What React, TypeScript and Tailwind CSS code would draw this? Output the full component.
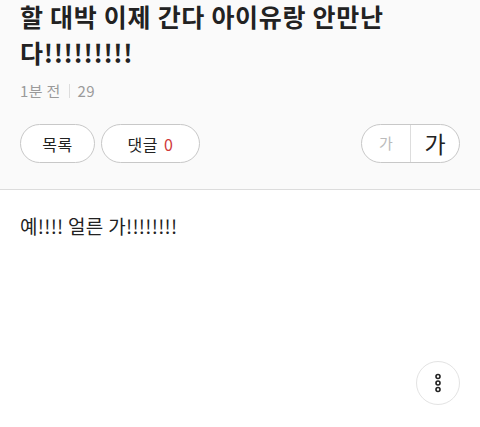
import React from "react";

export default function App() {
  const font = { fontFamily: '"Noto Sans CJK KR", "Noto Sans", sans-serif' };
  return (
    <div className="w-[480px] h-[427px] bg-white overflow-hidden" style={font}>
      <div className="bg-[#fafafa] border-b border-[#dcdcdc] px-5 pb-[26px]">
        <h1 className="text-[25px] leading-[36px] font-bold text-[#222] -mt-[2px] tracking-[0.7px]">
          할 대박 이제 간다 아이유랑 안만난다!!!!!!!!!
        </h1>
        <div className="flex items-center mt-[11px] text-[15px] leading-[20px] text-[#9a9a9a] tracking-[0.3px]">
          <span>1분 전</span>
          <span className="w-px h-[14px] bg-[#dddddd] mx-[8px]" />
          <span>29</span>
        </div>
        <div className="flex items-center mt-[23px]">
          <button className="h-[39px] w-[75px] rounded-full border border-[#c8c8c8] bg-white text-[16px] text-[#222] flex items-center justify-center tracking-[0.5px]">
            목록
          </button>
          <button className="ml-[6px] h-[39px] w-[99px] rounded-full border border-[#c8c8c8] bg-white text-[16px] text-[#222] flex items-center justify-center tracking-[0.5px]">
            댓글<span className="ml-[6px] text-[#d0393a]">0</span>
          </button>
          <div className="ml-auto h-[39px] w-[99px] rounded-full border border-[#c8c8c8] bg-white flex items-stretch">
            <div className="flex-1 flex items-center justify-center text-[15px] text-[#bbbbbb] border-r border-[#dddddd]">
              가
            </div>
            <div className="flex-1 flex items-center justify-center text-[23px] text-[#222]">
              가
            </div>
          </div>
        </div>
      </div>
      <div className="px-5 pt-[22px] text-[19px] leading-[28px] text-[#222] tracking-[0.3px]">
        예!!!! 얼른 가!!!!!!!!
      </div>
      <div className="flex justify-end pr-5 mt-[121px]">
        <button className="w-[44px] h-[44px] rounded-full border border-[#e3e3e3] bg-white flex items-center justify-center">
          <svg width="8" height="20" viewBox="0 0 8 20" fill="none" stroke="#222" strokeWidth="1.6">
            <circle cx="4" cy="3.5" r="2" />
            <circle cx="4" cy="10" r="2" />
            <circle cx="4" cy="16.5" r="2" />
          </svg>
        </button>
      </div>
    </div>
  );
}
